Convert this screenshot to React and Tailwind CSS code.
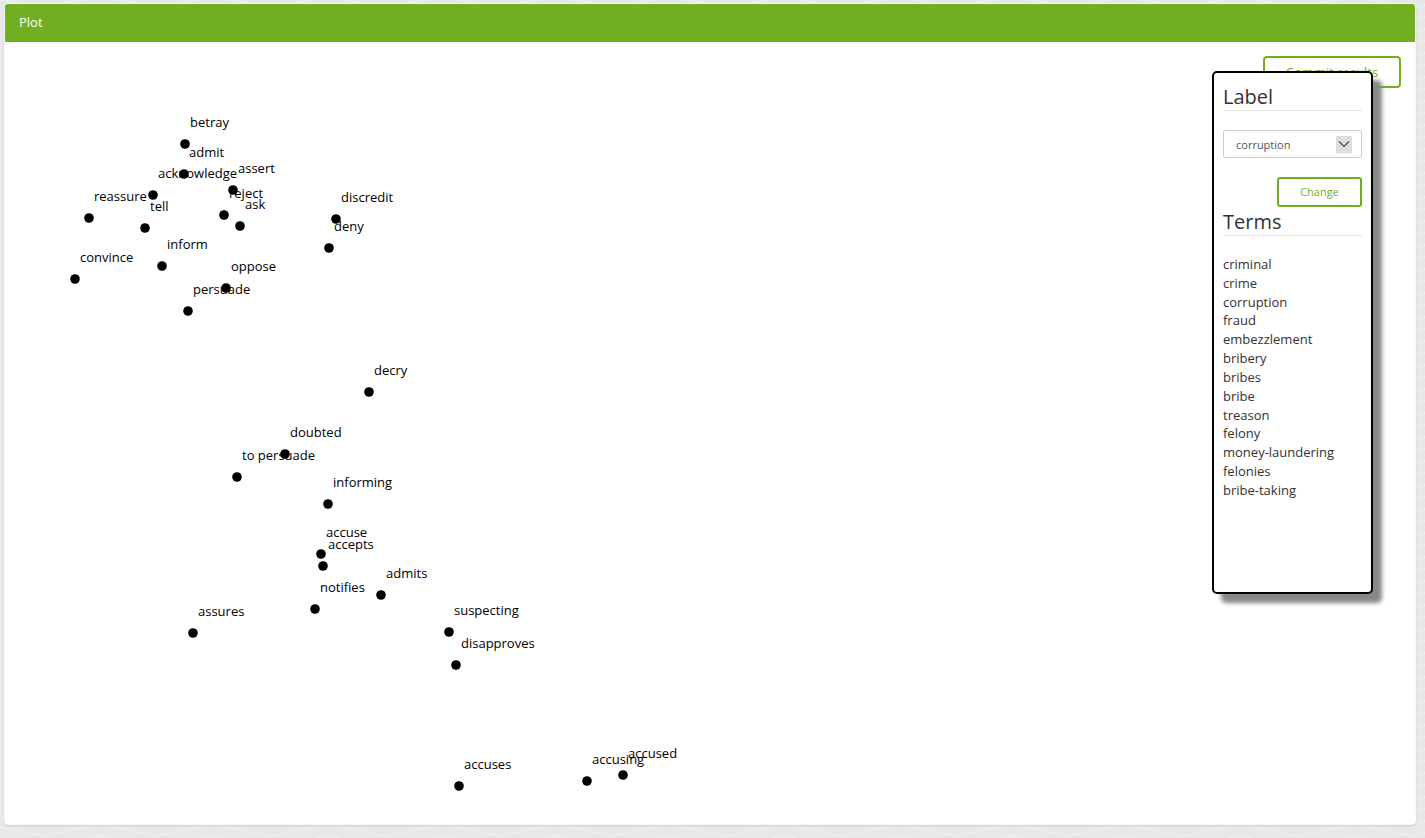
const NODES = [
  { word: "betray", x: 185, y: 144 },
  { word: "admit", x: 184, y: 174 },
  { word: "acknowledge", x: 153, y: 195 },
  { word: "assert", x: 233, y: 190 },
  { word: "reject", x: 224, y: 215 },
  { word: "ask", x: 240, y: 226 },
  { word: "reassure", x: 89, y: 218 },
  { word: "tell", x: 145, y: 228 },
  { word: "discredit", x: 336, y: 219 },
  { word: "deny", x: 329, y: 248 },
  { word: "inform", x: 162, y: 266 },
  { word: "convince", x: 75, y: 279 },
  { word: "oppose", x: 226, y: 288 },
  { word: "persuade", x: 188, y: 311 },
  { word: "decry", x: 369, y: 392 },
  { word: "doubted", x: 285, y: 454 },
  { word: "to persuade", x: 237, y: 477 },
  { word: "informing", x: 328, y: 504 },
  { word: "accuse", x: 321, y: 554 },
  { word: "accepts", x: 323, y: 566 },
  { word: "admits", x: 381, y: 595 },
  { word: "notifies", x: 315, y: 609 },
  { word: "assures", x: 193, y: 633 },
  { word: "suspecting", x: 449, y: 632 },
  { word: "disapproves", x: 456, y: 665 },
  { word: "accuses", x: 459, y: 786 },
  { word: "accusing", x: 587, y: 781 },
  { word: "accused", x: 623, y: 775 },
];

const TERMS = [
  "criminal",
  "crime",
  "corruption",
  "fraud",
  "embezzlement",
  "bribery",
  "bribes",
  "bribe",
  "treason",
  "felony",
  "money-laundering",
  "felonies",
  "bribe-taking",
];

const ORIGIN = { x: 5, y: 88 };

function Backdrop() {
  return (
    <svg aria-hidden="true" className="absolute inset-0 -z-10 h-full w-full">
      <defs>
        <pattern id="waves" x="43" y="10" width="114" height="12" patternUnits="userSpaceOnUse">
          <rect width="114" height="12" fill="#e8e8e8" />
          <g fill="none" stroke="#eeeeee" strokeWidth="2">
            <path d="M0 -2 L57 -14 L114 -2" />
            <path d="M0 10 L57 -2 L114 10" />
            <path d="M0 22 L57 10 L114 22" />
          </g>
        </pattern>
      </defs>
      <rect width="100%" height="100%" fill="url(#waves)" />
    </svg>
  );
}

function Plot() {
  return (
    <svg role="img" aria-label="Word plot" className="block h-[736px] w-full text-[13px]">
      {NODES.map(({ word, x, y }) => (
        <g key={word}>
          <circle cx={x - ORIGIN.x} cy={y - ORIGIN.y} r="4.8" />
          <text x={x - ORIGIN.x + 5} y={y - ORIGIN.y - 17}>
            {word}
          </text>
        </g>
      ))}
    </svg>
  );
}

function LabelPanel() {
  return (
    <aside className="absolute top-[29px] right-[42px] flex h-[523px] w-[161px] flex-col rounded-[5px] border-2 border-black bg-white px-[9px] pt-3 text-[#333] shadow-[9px_9px_4px_#888]">
      <h2 className="border-b border-[#e5e5e5] pb-px text-xl leading-6">
        <label htmlFor="label">Label</label>
      </h2>
      <div className="relative mt-[19px]">
        <select
          id="label"
          defaultValue="corruption"
          className="block h-7 w-full appearance-none rounded-[2px] border border-[#ccc] bg-white px-3 pt-0.5 text-[11px] text-[#555]"
        >
          <option>corruption</option>
        </select>
        <svg
          viewBox="0 0 16 17"
          aria-hidden="true"
          className="pointer-events-none absolute top-1.5 right-2.5 h-[17px] w-4 bg-[#ddd]"
        >
          <path d="M3 5.5 L8 10.5 L13 5.5" fill="none" stroke="#444" strokeWidth="1.1" />
        </svg>
      </div>
      <button
        type="button"
        className="mt-[19px] h-[30px] w-[85px] self-end rounded-[3px] border-2 border-[#72ae22] bg-white text-[11px] text-[#72ae22]"
      >
        Change
      </button>
      <h2 className="mt-[3px] border-b border-[#e5e5e5] pb-px text-xl leading-6">Terms</h2>
      <ul className="mt-[19px] flex h-[244px] flex-col justify-between text-[13px] leading-[18px]">
        {TERMS.map((term) => (
          <li key={term}>{term}</li>
        ))}
      </ul>
    </aside>
  );
}

export default function App() {
  return (
    <div className="relative isolate min-h-screen pt-[3px] pr-[9px] pb-[13px] pl-1 font-['Open_Sans',sans-serif] text-[13px]">
      <Backdrop />
      <main className="rounded border border-[#f8f8f8] bg-white shadow-[0_1px_2px_rgba(0,0,0,0.12)]">
        <header className="flex h-[38px] items-center rounded-t-[3px] bg-[#72ae22] px-3.5 text-white">
          <h1>Plot</h1>
        </header>
        <section className="relative">
          <div className="flex justify-end px-3.5 pt-3.5">
            <button
              type="button"
              className="h-8 w-[138px] rounded border-2 border-[#72ae22] bg-white pt-0.5 text-[13px] text-[#72ae22]"
            >
              Commit results
            </button>
          </div>
          <Plot />
          <LabelPanel />
        </section>
      </main>
    </div>
  );
}
